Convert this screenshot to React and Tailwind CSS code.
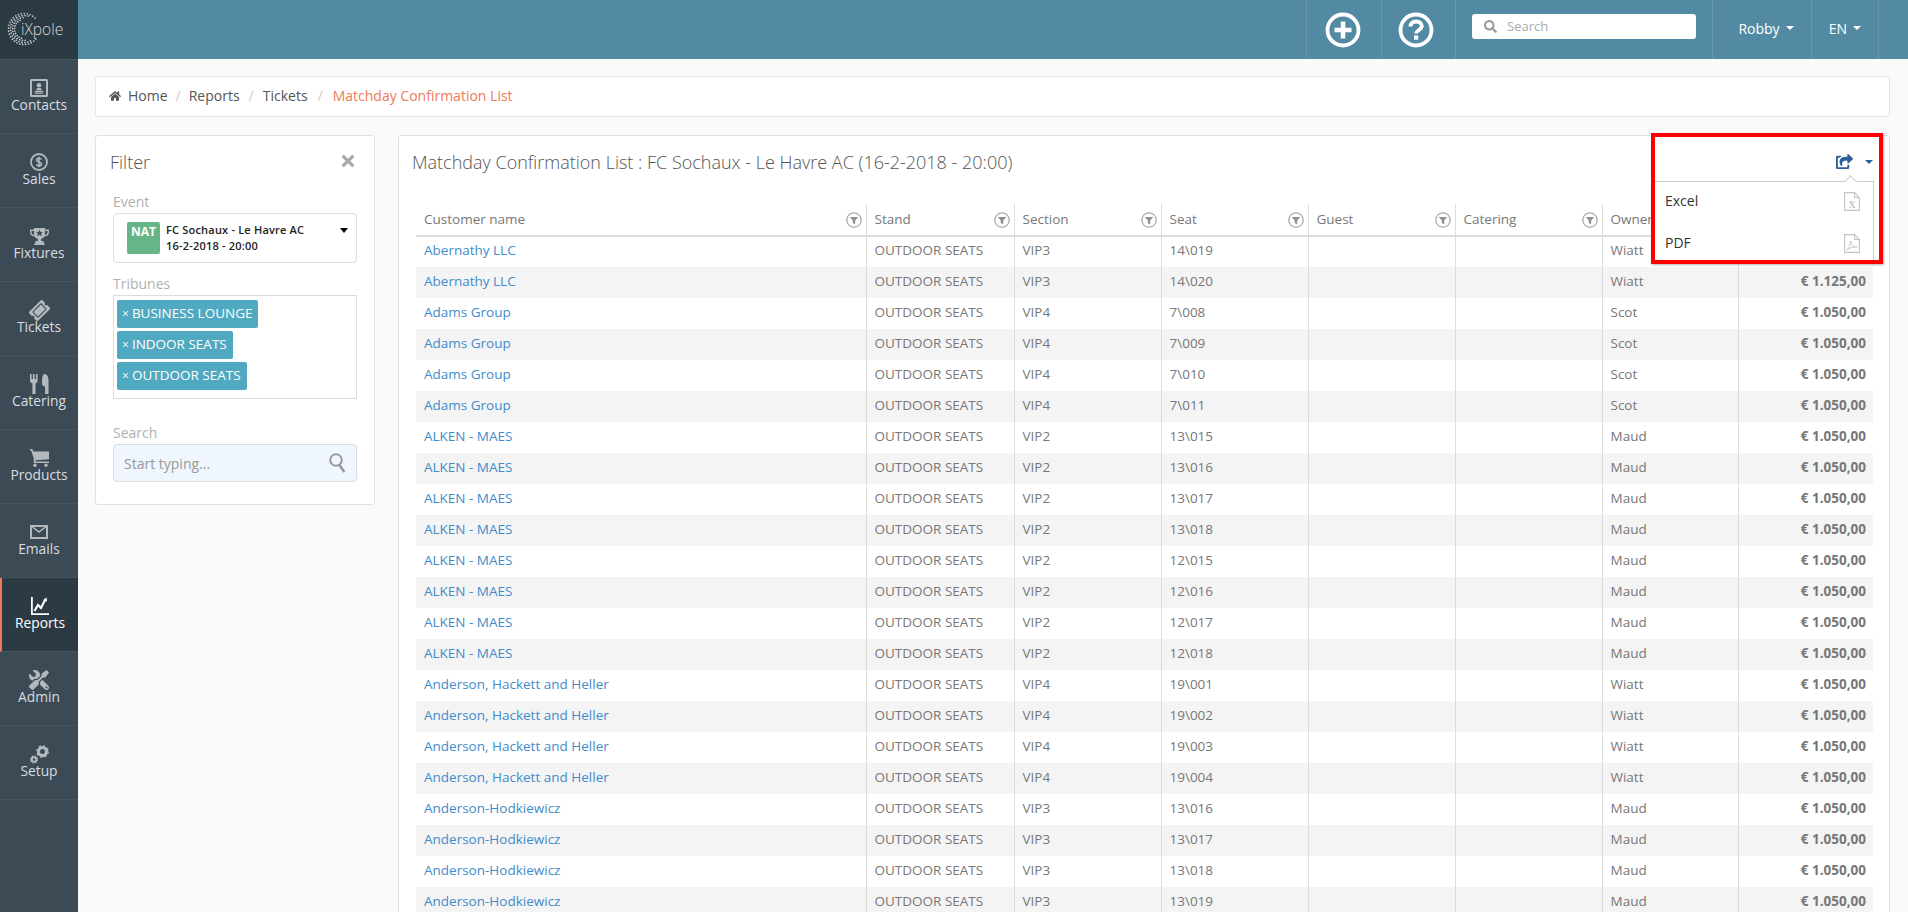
import React from "react";
import { FaTools, FaTicketAlt, FaHome, FaShareSquare, FaTimes, FaSearch } from "react-icons/fa";

const Contacts = () => (
  <svg width="18" height="18" viewBox="0 0 18 18"><path fillRule="evenodd" d="M0 1.500A1.500 1.500 0 0 1 1.500 0h15A1.500 1.500 0 0 1 18 1.500v15a1.500 1.500 0 0 1-1.500 1.500h-15A1.500 1.500 0 0 1 0 16.500zM2 2v14h14V2z" fill="currentColor"/><circle cx="9" cy="6.300" r="2.300" fill="currentColor"/><path d="M6.800 9h4.400v2.300H6.800zM4.800 11.800h8.400v1.400H4.800zM4.800 13.800h8.400v1H4.800z" fill="currentColor"/></svg>
);
const Sales = () => (
  <svg width="18" height="18" viewBox="0 0 18 18"><circle cx="9" cy="9" r="8" fill="none" stroke="currentColor" strokeWidth="1.800"/><path d="M11.500 6.500c-.5-1-1.400-1.300-2.500-1.300-1.300 0-2.500.6-2.500 1.900 0 2.700 5 1.200 5 3.800 0 1.300-1.200 1.900-2.500 1.900-1.200 0-2.200-.5-2.700-1.500M9 3.800v10.400" fill="none" stroke="currentColor" strokeWidth="1.500"/></svg>
);
const Trophy = () => (
  <svg width="19" height="17" viewBox="0 0 19 17"><path fillRule="evenodd" d="M4 0h11v1.500h4v2.800c0 2.400-2 4-4.500 4.300-.8 1.200-2 1.900-3.300 2.200V13h2.500v2.400h1V17H4.300v-1.600h1V13h2.500v-2.200c-1.300-.3-2.500-1-3.300-2.200C2 8.300 0 6.700 0 4.300V1.500h4zM1.500 3v1.300c0 1.300 1 2.300 2.700 2.700-.1-1.200-.2-2.600-.2-4zM17.500 3H15c0 1.400-.1 2.800-.2 4 1.700-.4 2.700-1.400 2.700-2.700z" fill="currentColor"/><path d="M9.500 1.800l1 2.200 2.400.2-1.800 1.600.6 2.400-2.200-1.300-2.200 1.300.6-2.400-1.800-1.600 2.400-.2z" fill="#3b4a55"/></svg>
);
const Cutlery = () => (
  <svg width="19" height="20" viewBox="0 0 19 20"><path d="M0 0h1.600v5h1.300V0h1.700v5h1.300V0h1.600v7c0 1.200-.9 2-2 2.300V20H2.400V9.300C.9 9 0 8.200 0 7z" fill="currentColor"/><path d="M14.500 0c2.300 0 4 2.200 4 6.500V20h-3.400v-7.500c-2 0-3.100-1.200-3.100-3.500 0-4.500 .5-9 2.500-9z" fill="currentColor"/></svg>
);
const Cart = () => (
  <svg width="19" height="18" viewBox="0 0 19 18"><path d="M0 0h2.200l1.300 2.500H19v7.800L5.600 11.200v1.300H19V14H3.800V9.800L1.200 1.500H0z" fill="currentColor"/><circle cx="5" cy="16.300" r="1.700" fill="currentColor"/><circle cx="16" cy="16.300" r="1.700" fill="currentColor"/></svg>
);
const Mail = () => (
  <svg width="18" height="14" viewBox="0 0 18 14"><path fillRule="evenodd" d="M0 0h18v14H0zM2 2.400V12h14V2.400L9 8zM3.600 2 9 6l5.400-4z" fill="currentColor"/></svg>
);
const Chart = () => (
  <svg width="18" height="18" viewBox="0 0 18 18"><path d="M0 0h1.800v16.200H18V18H0z" fill="currentColor"/><path d="M3.500 14l3.500-6 3 3 4.500-9" fill="none" stroke="currentColor" strokeWidth="2.200"/><path d="M15.800 .5v4.200l-3.400-1.700z" fill="currentColor"/></svg>
);
const Gears = () => (
  <svg width="19" height="19" viewBox="0 0 19 19">
    <circle cx="12.500" cy="6.500" r="4" fill="none" stroke="currentColor" strokeWidth="3"/>
    <circle cx="12.500" cy="6.500" r="5.700" fill="none" stroke="currentColor" strokeWidth="1.400" strokeDasharray="2.200 2.270"/>
    <circle cx="4" cy="14.500" r="2.300" fill="none" stroke="currentColor" strokeWidth="2"/>
    <circle cx="4" cy="14.500" r="3.500" fill="none" stroke="currentColor" strokeWidth="1.100" strokeDasharray="1.400 1.350"/>
  </svg>
);
const Funnel = () => (
  <svg width="16" height="16" viewBox="0 0 16 16" className="shrink-0 text-[#8f8f8f]"><circle cx="8" cy="8" r="7.200" fill="none" stroke="currentColor" strokeWidth="1.300" opacity=".75"/><path d="M3.800 5h8.400L9.200 8.400V12.500L6.800 11V8.400z" fill="currentColor"/></svg>
);
const Logo = () => {
  const dots = [];
  for (let ring = 0; ring < 4; ring++) {
    const r = 15.500 - ring * 2;
    const half = 140 - ring * 22;
    const step = 11 + ring * 1.500;
    for (let d = -half; d <= half; d += step) {
      const ang = ((180 + d) * Math.PI) / 180;
      dots.push(
        <circle key={ring + "-" + d} cx={24 + r * Math.cos(ang)} cy={29 + r * Math.sin(ang)} r="0.850" fill="#c2c6c9" />
      );
    }
  }
  return (
    <svg width="77" height="59" viewBox="0 0 77 59" className="block">
      {dots}
      <text x="21" y="35" fontFamily="'Open Sans', sans-serif" fontWeight="300" fontSize="15.500" fill="#d5d8da">iXpole</text>
    </svg>
  );
};

const NAV = [
  ["Contacts", <Contacts />],
  ["Sales", <Sales />],
  ["Fixtures", <Trophy />],
  ["Tickets", <FaTicketAlt size={19} className="-rotate-45" />],
  ["Catering", <Cutlery />],
  ["Products", <Cart />],
  ["Emails", <Mail />],
  ["Reports", <Chart />],
  ["Admin", <FaTools size={20} className="-scale-x-100" />],
  ["Setup", <Gears />],
];

const rows = [];
const add = (name, sec, seats, owner, price) => seats.forEach((s) => rows.push([name, sec, s, owner, price]));
add("Abernathy LLC", "VIP3", ["14\\019", "14\\020"], "Wiatt", "€ 1.125,00");
add("Adams Group", "VIP4", ["7\\008", "7\\009", "7\\010", "7\\011"], "Scot", "€ 1.050,00");
add("ALKEN - MAES", "VIP2", ["13\\015", "13\\016", "13\\017", "13\\018", "12\\015", "12\\016", "12\\017", "12\\018"], "Maud", "€ 1.050,00");
add("Anderson, Hackett and Heller", "VIP4", ["19\\001", "19\\002", "19\\003", "19\\004"], "Wiatt", "€ 1.050,00");
add("Anderson-Hodkiewicz", "VIP3", ["13\\016", "13\\017", "13\\018", "13\\019"], "Maud", "€ 1.050,00");

const HEAD = ["Customer name", "Stand", "Section", "Seat", "Guest", "Catering", "Owner", ""];

const Caret = ({ c = "border-t-white" }) => (
  <span className={"inline-block w-0 h-0 border-x-[4px] border-x-transparent border-t-[4px] " + c} />
);

const XFile = ({ children }) => (
  <svg width="16" height="19" viewBox="0 0 16 19" className="text-[#c4c4c4]"><path d="M.6.6h10l4.800 4.800v13H.6zM10.600.6v4.800h4.800" fill="none" stroke="currentColor" strokeWidth="1.100"/>{children}</svg>
);

export default function App() {
  return (
    <div className="flex h-[912px] w-full overflow-hidden bg-[#fafafa] text-[14px] text-[#777] font-['Open_Sans',sans-serif]">
      <aside className="flex w-[78px] shrink-0 flex-col bg-[#3b4a55]">
        <div className="h-[60px] border-b border-[#46545f] bg-[#2c3a44]">
          <Logo />
        </div>
        {NAV.map(([label, icon]) => {
          const active = label === "Reports";
          return (
            <div
              key={label}
              className={
                "flex h-[74px] flex-col items-center border-b border-[#46545f] pt-[18px] " +
                (active ? "border-l-2 border-l-[#ee7a5a] bg-[#2c3a44] text-white" : "text-[#b4b9bd]")
              }
            >
              <div className="flex h-[20px] items-center justify-center">{icon}</div>
              <span className={"mt-[-3px] text-[13.8px] leading-[19px] " + (active ? "text-white" : "text-[#d8dde0]")}>{label}</span>
            </div>
          );
        })}
      </aside>

      <div className="flex min-w-0 flex-1 flex-col">
        <header className="flex h-[59px] shrink-0 items-stretch bg-[#528aa3] text-white">
          <div className="flex-1" />
          <div className="flex w-[75px] items-center justify-center border-l border-[#6596ad]">
            <svg width="36" height="36" viewBox="0 0 36 36" className="mr-[3px]"><circle cx="18" cy="18" r="15.500" fill="none" stroke="#fff" strokeWidth="3.800"/><path d="M18 9.500v17M9.500 18h17" stroke="#fff" strokeWidth="4.500"/></svg>
          </div>
          <div className="flex w-[74px] items-center justify-center border-l border-[#6596ad]">
            <svg width="36" height="36" viewBox="0 0 36 36" className="mr-[5px]"><circle cx="18" cy="18" r="15.500" fill="none" stroke="#fff" strokeWidth="3.800"/><path d="M12.500 14.500c0-3.200 2.500-5 5.700-5 3.300 0 5.600 1.800 5.600 4.600 0 4-5.500 3.800-5.500 7.500" fill="none" stroke="#fff" strokeWidth="3.800"/><path d="M16 23.500h4.200v4.200H16z" fill="#fff"/></svg>
          </div>
          <div className="flex w-[258px] items-start border-x border-[#6596ad] pl-[16px] pt-[14px]">
            <div className="flex h-[25px] w-[224px] items-center rounded-[3px] bg-white pl-[12px] text-[13px] text-[#aaa]">
              <FaSearch size={13} className="text-[#999]" />
              <span className="ml-[10px]">Search</span>
            </div>
          </div>
          <div className="flex w-[99px] items-center justify-center gap-[6px] border-r border-[#6596ad] pb-[3px] pl-[8px] text-[14px]">
            Robby <Caret />
          </div>
          <div className="flex w-[67px] items-center justify-center gap-[6px] border-r border-[#6596ad] pb-[3px] text-[14px]">
            EN <Caret />
          </div>
          <div className="w-[29px]" />
        </header>

        <main className="flex min-h-0 flex-1 flex-col pl-[17px] pr-[18px] pt-[17px]">
          <nav className="flex h-[41px] shrink-0 items-center rounded-[3px] border border-[#e6e6e6] bg-white pb-[2px] pl-[13px] text-[#555]">
            <FaHome size={12} className="mr-[7px] text-[#555]" />
            <span>Home</span>
            <span className="mx-[8px] text-[#ccc]">/</span>
            <span>Reports</span>
            <span className="mx-[9px] text-[#ccc]">/</span>
            <span>Tickets</span>
            <span className="mx-[10px] text-[#ccc]">/</span>
            <span className="text-[#ee7a5a]">Matchday Confirmation List</span>
          </nav>

          <div className="mt-[18px] flex min-h-0 flex-1 items-start gap-[23px]">
            <section className="w-[280px] shrink-0 rounded-[3px] border border-[#e2e2e2] bg-white px-[17px] pb-[22px] pt-[14px]">
              <div className="flex items-center justify-between">
                <h2 className="-ml-[3px] text-[18px] font-light leading-[25px] text-[#555]">Filter</h2>
                <FaTimes size={18} className="-mt-[4px] text-[#aaa]" />
              </div>
              <div className="mt-[17px] leading-[20px] text-[#b0b0b0]">Event</div>
              <div className="relative mt-[1px] flex h-[50px] items-start rounded-[4px] border border-[#ddd] pl-[13px] pt-[8px]">
                <div className="flex h-[32px] w-[33px] justify-center rounded-[2px] bg-[#66b587] pt-[1px] text-[12px] font-bold leading-[18px] text-white">NAT</div>
                <div className="ml-[6px] text-[11px] font-semibold leading-[16px] tracking-[0.2px] text-[#222]">
                  <div>FC Sochaux - Le Havre AC</div>
                  <div>16-2-2018 - 20:00</div>
                </div>
                <span className="absolute right-[8px] top-[14px] h-0 w-0 border-x-[4px] border-t-[5px] border-x-transparent border-t-black" />
              </div>
              <div className="mt-[11px] leading-[20px] text-[#b0b0b0]">Tribunes</div>
              <div className="mt-[1px] flex h-[104px] flex-col items-start gap-[3px] border border-[#ddd] pl-[3px] pt-[4px]">
                {["BUSINESS LOUNGE", "INDOOR SEATS", "OUTDOOR SEATS"].map((t) => (
                  <div key={t} className="flex h-[28px] items-center rounded-[2px] bg-[#4fa9c1] pb-[2px] pl-[5px] pr-[6px] text-[13.5px] text-white">
                    <span className="mr-[3px] mt-[2px] text-[12px]">×</span>
                    {t}
                  </div>
                ))}
              </div>
              <div className="mt-[24px] leading-[20px] text-[#b0b0b0]">Search</div>
              <div className="mt-[1px] flex h-[38px] items-center justify-between rounded-[4px] border border-[#ddd] bg-[#eff6fd] pl-[10px] pr-[10px] text-[#999]">
                <span>Start typing...</span>
                <svg width="17" height="20" viewBox="0 0 17 20" className="text-[#9a9a9a]"><circle cx="7" cy="7" r="5.800" fill="none" stroke="currentColor" strokeWidth="2"/><path d="M10.500 12l4.800 7" stroke="currentColor" strokeWidth="2.600"/></svg>
              </div>
            </section>

            <section className="relative min-h-[800px] flex-1 rounded-[3px] border border-[#e2e2e2] bg-white pl-[17px] pr-[16px] pt-[14px]">
              <h1 className="-ml-[4px] text-[18px] font-light leading-[25px] text-[#555]">
                Matchday Confirmation List : FC Sochaux - Le Havre AC (16-2-2018 - 20:00)
              </h1>
              <table className="mt-[29px] w-full table-fixed border-collapse text-[13.5px]">
                <colgroup>
                  <col className="w-[450px]" />
                  <col className="w-[148px]" />
                  <col className="w-[147px]" />
                  <col className="w-[147px]" />
                  <col className="w-[147px]" />
                  <col className="w-[147px]" />
                  <col className="w-[136px]" />
                  <col />
                </colgroup>
                <thead>
                  <tr className="h-[32px] border-b-2 border-[#ddd]">
                    {HEAD.map((h, i) => (
                      <th key={i} className={"p-0 pl-[8px] pr-[4px] text-left font-normal " + (i < 7 ? "border-r border-[#ddd]" : "")}>
                        <div className="flex items-center justify-between">
                          <span className="pb-[1px]">{h}</span>
                          {i < 6 && <Funnel />}
                        </div>
                      </th>
                    ))}
                  </tr>
                </thead>
                <tbody>
                  {rows.map((r, i) => (
                    <tr key={i} className={"h-[31px] " + (i % 2 ? "bg-[#f4f4f4]" : "")}>
                      <td className="truncate border-r border-[#ddd] p-0 pb-[3px] pl-[8px] text-[#428bca]">{r[0]}</td>
                      <td className="border-r border-[#ddd] p-0 pb-[3px] pl-[8px]">OUTDOOR SEATS</td>
                      <td className="border-r border-[#ddd] p-0 pb-[3px] pl-[8px]">{r[1]}</td>
                      <td className="border-r border-[#ddd] p-0 pb-[3px] pl-[8px]">{r[2]}</td>
                      <td className="border-r border-[#ddd] p-0 pb-[3px] pl-[8px]" />
                      <td className="border-r border-[#ddd] p-0 pb-[3px] pl-[8px]" />
                      <td className="border-r border-[#ddd] p-0 pb-[3px] pl-[8px]">{r[3]}</td>
                      <td className="p-0 pb-[3px] pr-[7px] text-right font-bold">{r[4]}</td>
                    </tr>
                  ))}
                </tbody>
              </table>

              <div className="absolute right-[6px] top-[-3px] z-20 h-[131px] w-[232px] border-4 border-[#f00] bg-white shadow-[1px_1px_2px_rgba(0,0,0,.3)]">
                <div className="absolute right-[6px] top-[16px] flex items-center gap-[12px] text-[#2d6099]">
                  <FaShareSquare size={17} />
                  <Caret c="border-t-[#2d6099]" />
                </div>
                <div className="absolute left-0 right-[5px] top-[44px] bottom-0 border-r border-t border-[#ccc]">
                  <div className="absolute right-[18px] top-[-5px] h-[9px] w-[9px] rotate-45 border-l border-t border-[#ccc] bg-white" />
                  <div className="flex items-center justify-between pl-[10px] pr-[13px] pt-[7px] text-[#333]">
                    <span className="leading-[24px]">Excel</span>
                    <XFile><text x="8" y="15.500" textAnchor="middle" fontSize="10" fontWeight="700" fontFamily="'Liberation Serif', serif" fill="currentColor">X</text></XFile>
                  </div>
                  <div className="flex items-center justify-between pl-[10px] pr-[13px] pt-[18px] text-[#333]">
                    <span className="leading-[24px]">PDF</span>
                    <XFile><path d="M2.500 16c2.500-1.500 4-5 4.200-9 .8 4 2.500 5.500 6.500 6-3.500-.3-7 .8-10.700 3z" fill="none" stroke="currentColor" strokeWidth=".9"/></XFile>
                  </div>
                </div>
              </div>
            </section>
          </div>
        </main>
      </div>
    </div>
  );
}
